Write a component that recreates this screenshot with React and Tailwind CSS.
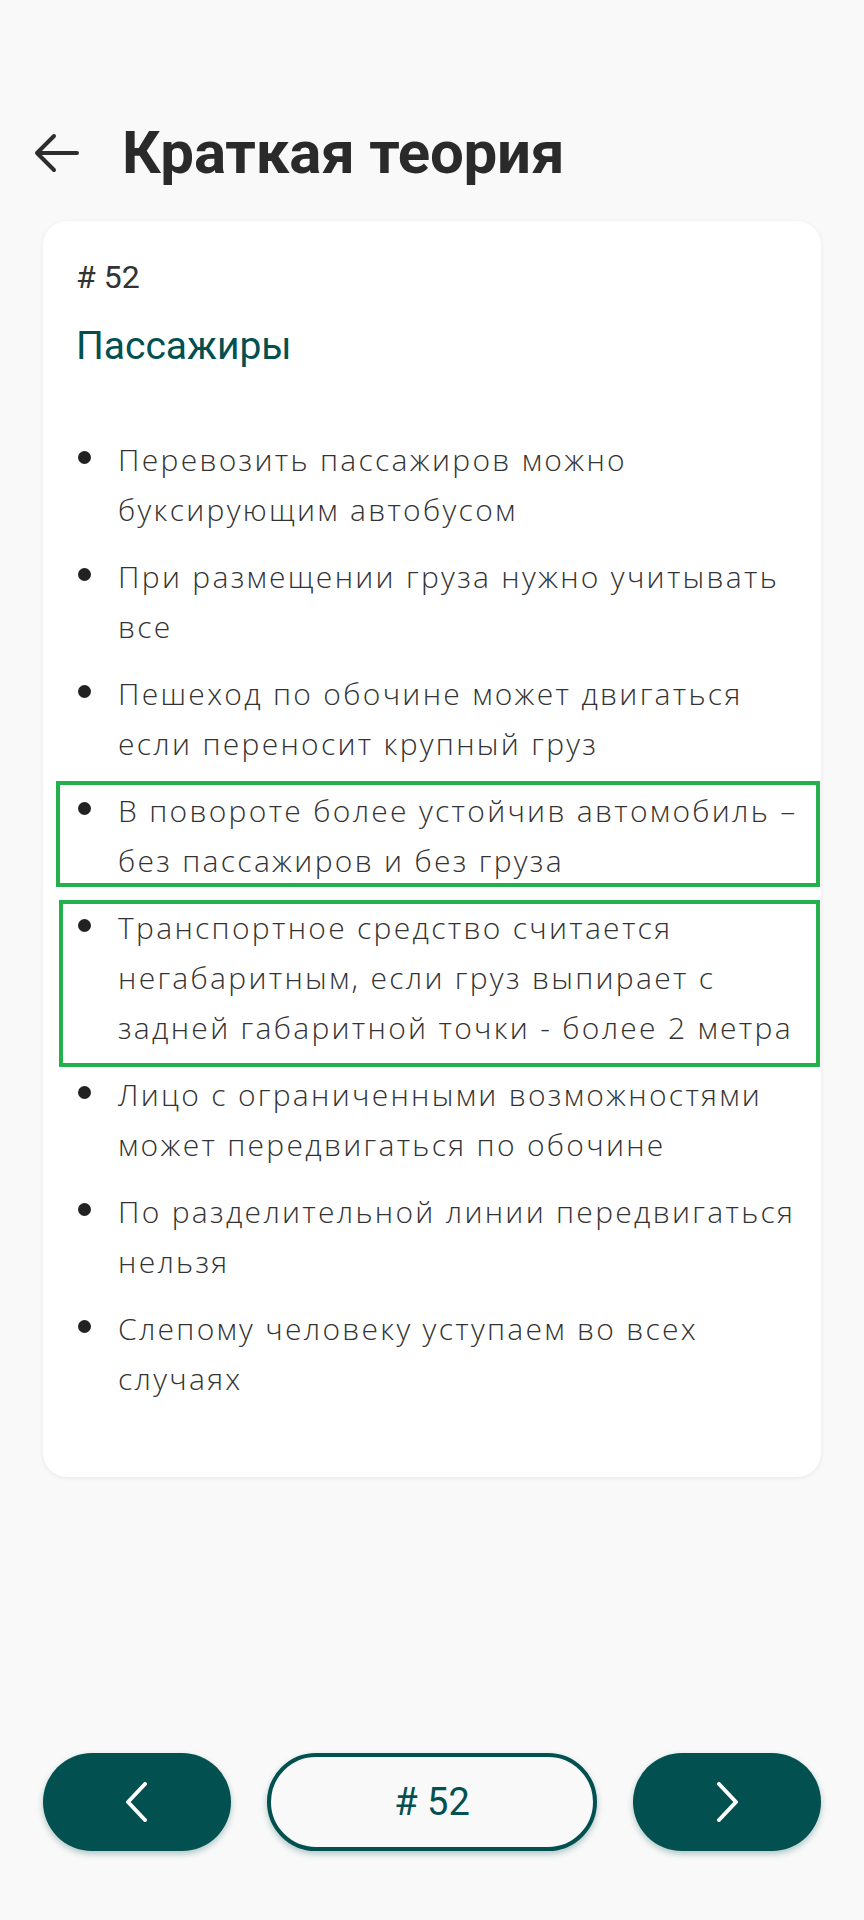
import React from 'react';

const items = [
  { lines: ['Перевозить пассажиров можно', 'буксирующим автобусом'] },
  { lines: ['При размещении груза нужно учитывать', 'все'] },
  { lines: ['Пешеход по обочине может двигаться', 'если переносит крупный груз'] },
  { lines: ['В повороте более устойчив автомобиль –', 'без пассажиров и без груза'], mark: 'a' },
  { lines: ['Транспортное средство считается', 'негабаритным, если груз выпирает с', 'задней габаритной точки - более 2 метра'], mark: 'b' },
  { lines: ['Лицо с ограниченными возможностями', 'может передвигаться по обочине'] },
  { lines: ['По разделительной линии передвигаться', 'нельзя'] },
  { lines: ['Слепому человеку уступаем во всех', 'случаях'] },
];

function Chevron({ dir }) {
  const pts = dir === 'left' ? '20,2 3,20 20,38' : '4,2 21,20 4,38';
  return (
    <svg width="24" height="40" viewBox="0 0 24 40" fill="none">
      <polyline points={pts} stroke="#fff" strokeWidth="4" strokeLinecap="round" strokeLinejoin="round" />
    </svg>
  );
}

export default function App() {
  return (
    <div className="min-h-[1920px] bg-[#f9f9f9] flex flex-col font-['Roboto',sans-serif]">
      <header className="flex items-center h-[70px] mt-[118px]">
        <button className="ml-[34px] w-[46px] h-[40px] flex items-center">
          <svg width="46" height="40" viewBox="0 0 46 40" fill="none">
            <path d="M3 20 H43 M3 20 L20 3 M3 20 L20 37" stroke="#2d2d2d" strokeWidth="4" strokeLinecap="round" strokeLinejoin="round" />
          </svg>
        </button>
        <h1 className="ml-[42px] text-[60px] font-bold text-[#2a2a2a] leading-none tracking-[-0.2px]">Краткая теория</h1>
      </header>

      <div className="mx-[43px] mt-[33px] bg-white rounded-[24px] shadow-[0_1px_4px_rgba(0,0,0,0.08)] px-[33px] pt-[36px] pb-[73px]">
        <div className="text-[32px] leading-[40px] text-[#333]"># 52</div>
        <div className="mt-[25px] text-[39px] leading-[48px] text-[#02504f]">Пассажиры</div>
        <ul className="mt-[65px] flex flex-col gap-[17px] font-['Open_Sans',sans-serif] font-light text-[30px] tracking-[2.3px] leading-[50px] text-[#333]">
          {items.map((it, i) => (
            <li key={i} className="relative flex">
              <span className="w-[42px] h-[50px] flex items-center shrink-0">
                <span className="ml-[2px] -mt-[5px] w-[13px] h-[13px] rounded-full bg-[#222]" />
              </span>
              <span>
                {it.lines.map((l, j) => (
                  <span key={j} className="block whitespace-nowrap">{l}</span>
                ))}
              </span>
              {it.mark === 'a' && (
                <span className="absolute left-[-20px] right-[-32px] top-[-5px] bottom-[-1px] border-[4px] border-[#22b14c] pointer-events-none" />
              )}
              {it.mark === 'b' && (
                <span className="absolute left-[-17px] right-[-32px] top-[-3px] bottom-[-14px] border-[4px] border-[#22b14c] pointer-events-none" />
              )}
            </li>
          ))}
        </ul>
      </div>

      <div className="mt-auto mb-[69px] px-[43px] flex gap-[36px] h-[98px]">
        <button className="w-[188px] rounded-full bg-[#02504f] flex items-center justify-center shadow-[0_3px_6px_rgba(2,80,79,0.3)]">
          <Chevron dir="left" />
        </button>
        <button className="flex-1 rounded-full border-[4px] border-[#02504f] bg-[#f9f9f9] text-[#02504f] text-[38px] flex items-center justify-center shadow-[0_3px_6px_rgba(2,80,79,0.3)]">
          # 52
        </button>
        <button className="w-[188px] rounded-full bg-[#02504f] flex items-center justify-center shadow-[0_3px_6px_rgba(2,80,79,0.3)]">
          <Chevron dir="right" />
        </button>
      </div>
    </div>
  );
}
